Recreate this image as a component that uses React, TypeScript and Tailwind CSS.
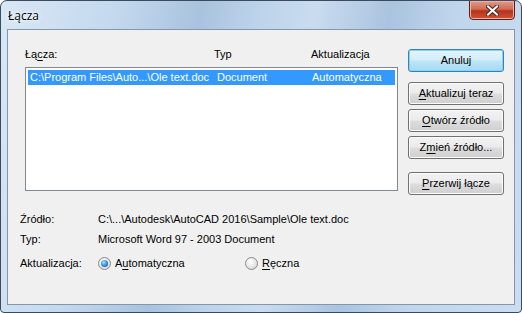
import React from "react";

// ---------------------------------------------------------------------------
// Small pieces of the Windows 7 dialog
// ---------------------------------------------------------------------------

function Mn({ children }: { children: React.ReactNode }) {
  return <span className="underline underline-offset-[2px]">{children}</span>;
}

function Button({
  children,
  focused,
  className,
}: {
  children: React.ReactNode;
  focused?: boolean;
  className?: string;
}) {
  return (
    <div
      className={
        "flex h-[23px] w-[96px] items-center justify-center rounded-[3px] border text-[11px] text-black " +
        (focused
          ? "border-[#3c7fb1] bg-[linear-gradient(#e5f4fc_0%,#d3edfa_48%,#bde5f8_52%,#a7d9f5_100%)] shadow-[inset_0_0_0_1px_#7fd6f9] "
          : "border-[#707070] bg-[linear-gradient(#f2f2f2_0%,#ebebeb_48%,#dddddd_52%,#cfcfcf_100%)] shadow-[inset_0_0_0_1px_#fcfcfc] ") +
        (className ?? "")
      }
    >
      {children}
    </div>
  );
}

function Radio({ checked }: { checked?: boolean }) {
  return (
    <div className="flex h-[13px] w-[13px] items-center justify-center rounded-full border border-[#8a8a8a] bg-[radial-gradient(circle_at_40%_35%,#ffffff_0%,#e8e8e8_50%,#c9c9c9_100%)]">
      {checked && (
        <div className="h-[7px] w-[7px] rounded-full bg-[radial-gradient(circle_at_40%_35%,#a9e2ff_0%,#2a8ad4_55%,#0f4f8f_100%)]" />
      )}
    </div>
  );
}

// ---------------------------------------------------------------------------
// App
// ---------------------------------------------------------------------------

export default function App() {
  return (
    <div
      className="flex h-[313px] w-[522px] flex-col overflow-hidden rounded-t-[7px] rounded-b-[4px] border border-[#3b4a5c] bg-[linear-gradient(100deg,#d8e7f5_0%,#c4d9ee_20%,#a9c3de_35%,#bcd3ea_45%,#c9dcef_55%,#aac4df_68%,#c0d6ec_80%,#cbddf0_100%)]"
      style={{ fontFamily: '"Liberation Sans", Arial, sans-serif' }}
    >
      {/* Title bar */}
      <div className="flex h-[28px] shrink-0 items-start justify-between pl-[7px]">
        <span
          className="mt-[6px] text-[12px] text-black [text-shadow:0_0_6px_#ffffff,0_0_3px_#ffffff]"
          style={{ fontFamily: '"Open Sans", "Noto Sans", sans-serif' }}
        >
          Łącza
        </span>
        <div className="mr-[6px] mt-[-1px] flex h-[20px] w-[46px] items-center justify-center rounded-b-[4px] border border-[#5a1e16] bg-[linear-gradient(#e3998a_0%,#d06c55_45%,#b8321a_55%,#cf5236_100%)] shadow-[inset_0_0_0_1px_#eeb2a2]">
          <svg width="13" height="11" viewBox="0 0 13 11">
            <path
              d="M2 1.5 L11 9.5 M11 1.5 L2 9.5"
              stroke="#4a2a24"
              strokeWidth="4"
              strokeLinecap="square"
            />
            <path
              d="M2 1.5 L11 9.5 M11 1.5 L2 9.5"
              stroke="#ffffff"
              strokeWidth="2"
              strokeLinecap="square"
            />
          </svg>
        </div>
      </div>

      {/* Client area */}
      <div className="mx-[6px] mb-[7px] flex flex-1 flex-col border border-[#8396ad] bg-[#f0f0f0] text-[11px] text-black">
        <div className="flex pl-[17px] pt-[16px]">
          {/* List of links */}
          <div className="flex w-[373px] flex-col">
            <div className="flex h-[16px] items-center">
              <span className="w-[189px]">
                Łą<Mn>c</Mn>za:
              </span>
              <span className="w-[97px]">Typ</span>
              <span>Aktualizacja</span>
            </div>
            <div className="mt-[5px] h-[124px] border border-[#828790] bg-white p-[2px]">
              <div className="flex h-[15px] items-center bg-[#3399ff] pl-[2px] text-white">
                <span className="w-[187px]">C:\Program Files\Auto...\Ole text.doc</span>
                <span className="w-[95px]">Document</span>
                <span>Automatyczna</span>
              </div>
            </div>
          </div>

          {/* Buttons */}
          <div className="ml-[10px] mt-[3px] flex flex-col">
            <Button focused>Anuluj</Button>
            <Button className="mt-[10px]">
              <Mn>A</Mn>ktualizuj teraz
            </Button>
            <Button className="mt-[4px]">
              <Mn>O</Mn>twórz źródło
            </Button>
            <Button className="mt-[4px]">
              Z<Mn>m</Mn>ień źródło...
            </Button>
            <Button className="mt-[13px]">
              <Mn>P</Mn>rzerwij łącze
            </Button>
          </div>
        </div>

        {/* Details */}
        <div className="mt-[14px] flex flex-col pl-[12px]">
          <div className="flex h-[20px] items-center">
            <span className="w-[78px]">Źródło:</span>
            <span>C:\...\Autodesk\AutoCAD 2016\Sample\Ole text.doc</span>
          </div>
          <div className="flex h-[20px] items-center">
            <span className="w-[78px]">Typ:</span>
            <span>Microsoft Word 97 - 2003 Document</span>
          </div>
          <div className="mt-[4px] flex h-[20px] items-center">
            <span className="w-[78px]">Aktualizacja:</span>
            <div className="flex w-[147px] items-center gap-[4px]">
              <Radio checked />
              <span>
                A<Mn>u</Mn>tomatyczna
              </span>
            </div>
            <div className="flex items-center gap-[4px]">
              <Radio />
              <span>
                <Mn>R</Mn>ęczna
              </span>
            </div>
          </div>
        </div>
      </div>
    </div>
  );
}
